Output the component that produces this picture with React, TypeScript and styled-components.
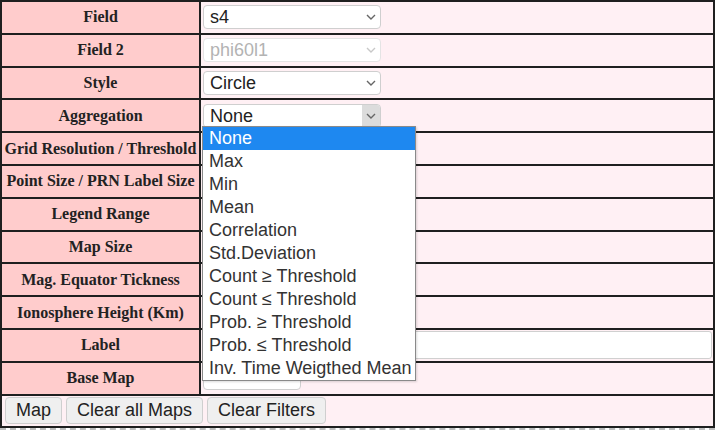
import React from "react";
import styled, { createGlobalStyle } from "styled-components";

const GlobalStyle = createGlobalStyle`
  body {
    margin: 0;
    background: #ffffff;
    font-family: "Liberation Serif", serif;
  }
`;

const aggregationOptions = [
  "None",
  "Max",
  "Min",
  "Mean",
  "Correlation",
  "Std.Deviation",
  "Count ≥ Threshold",
  "Count ≤ Threshold",
  "Prob. ≥ Threshold",
  "Prob. ≤ Threshold",
  "Inv. Time Weigthed Mean",
];

const Page = styled.div`
  width: 717px;
  height: 430px;
  overflow: hidden;
`;

const Table = styled.table`
  width: 715px;
  border-collapse: collapse;
  border: 2px solid #1f1f1f;
`;

const LabelCell = styled.td`
  width: 195px;
  height: 30.8px;
  padding: 0 1px;
  background: #ffcccc;
  border: 2px solid #1f1f1f;
  text-align: center;
  font-family: "Liberation Serif", serif;
  font-weight: bold;
  font-size: 16px;
  color: #222;
  white-space: nowrap;
`;

const ValueCell = styled.td`
  height: 30.8px;
  padding: 0 1px;
  background: #fff0f4;
  border: 2px solid #1f1f1f;
  vertical-align: middle;
`;

const ButtonCell = styled.td`
  height: 30.8px;
  padding: 0 3px;
  background: #fff0f4;
  border: 2px solid #1f1f1f;
`;

const SelectBox = styled.div<{ $width: number; $disabled?: boolean }>`
  position: relative;
  display: flex;
  align-items: center;
  width: ${(p) => p.$width}px;
  height: 24px;
  box-sizing: border-box;
  margin-left: 1px;
  border: 1px solid ${(p) => (p.$disabled ? "#e4e4e4" : "#cfcfcf")};
  border-radius: 4px;
  background: #fff;
  font-family: "Liberation Sans", Arial, sans-serif;
  font-size: 18px;
  color: ${(p) => (p.$disabled ? "#b3b3b3" : "#222")};
`;

const SelectText = styled.span`
  flex: 1;
  padding-left: 6px;
  line-height: 22px;
  white-space: nowrap;
  overflow: hidden;
`;

const Arrow = styled.span<{ $hover?: boolean; $disabled?: boolean }>`
  display: flex;
  align-items: center;
  justify-content: center;
  width: 18px;
  align-self: stretch;
  background: ${(p) => (p.$hover ? "#dcdcdc" : "transparent")};
  border-radius: 0 3px 3px 0;
  color: ${(p) => (p.$disabled ? "#c8c8c8" : "#666")};
`;

const DropList = styled.ul`
  position: absolute;
  top: 21px;
  left: -2px;
  z-index: 5;
  margin: 0;
  padding: 0;
  list-style: none;
  width: 214px;
  box-sizing: border-box;
  border: 1px solid #8a8a8a;
  background: #fff;
  box-shadow: 1px 1px 2px rgba(0, 0, 0, 0.15);
`;

const DropItem = styled.li<{ $active?: boolean }>`
  height: 23px;
  line-height: 23px;
  padding-left: 6px;
  font-family: "Liberation Sans", Arial, sans-serif;
  font-size: 18px;
  white-space: nowrap;
  color: ${(p) => (p.$active ? "#fff" : "#333")};
  background: ${(p) => (p.$active ? "#1e88f0" : "transparent")};
`;

const TextInput = styled.input`
  display: block;
  width: 100%;
  height: 28px;
  box-sizing: border-box;
  border: 1px solid #d0d0d0;
  border-radius: 3px;
  background: #fff;
  font-family: "Liberation Sans", Arial, sans-serif;
  font-size: 18px;
`;

const SmallInput = styled.input`
  width: 80px;
  height: 22px;
  box-sizing: border-box;
  margin-left: 2px;
  border: 1px solid #ccc;
  border-radius: 3px;
  font-size: 16px;
`;

const Buttons = styled.div`
  display: flex;
  gap: 4px;
`;

const Button = styled.button`
  height: 27px;
  padding: 0 10px;
  border: 1px solid #cfcfcf;
  border-radius: 4px;
  background: #efefef;
  font-family: "Liberation Sans", Arial, sans-serif;
  font-size: 18px;
  color: #222;
`;

const DashedLine = styled.div`
  width: 715px;
  border-top: 2px dashed #bdbdbd;
`;

const Chevron = () => (
  <svg width="10" height="6" viewBox="0 0 10 6">
    <polyline points="1,1 5,5 9,1" fill="none" stroke="currentColor" strokeWidth="1.4" />
  </svg>
);

type SelectProps = {
  value: string;
  width?: number;
  disabled?: boolean;
  hover?: boolean;
  children?: React.ReactNode;
};

const FakeSelect = ({ value, width = 178, disabled, hover, children }: SelectProps) => (
  <SelectBox $width={width} $disabled={disabled}>
    <SelectText>{value}</SelectText>
    <Arrow $hover={hover} $disabled={disabled}>
      <Chevron />
    </Arrow>
    {children}
  </SelectBox>
);

const Row = ({ label, children }: { label: string; children?: React.ReactNode }) => (
  <tr>
    <LabelCell>{label}</LabelCell>
    <ValueCell>{children}</ValueCell>
  </tr>
);

export default function App() {
  return (
    <Page>
      <GlobalStyle />
      <Table>
        <tbody>
          <Row label="Field">
            <FakeSelect value="s4" />
          </Row>
          <Row label="Field 2">
            <FakeSelect value="phi60l1" disabled />
          </Row>
          <Row label="Style">
            <FakeSelect value="Circle" />
          </Row>
          <Row label="Aggregation">
            <FakeSelect value="None" hover>
              <DropList>
                {aggregationOptions.map((o, i) => (
                  <DropItem key={o} $active={i === 0}>
                    {o}
                  </DropItem>
                ))}
              </DropList>
            </FakeSelect>
          </Row>
          <Row label="Grid Resolution / Threshold">
            <SmallInput />
          </Row>
          <Row label="Point Size / PRN Label Size">
            <SmallInput />
          </Row>
          <Row label="Legend Range">
            <SmallInput />
          </Row>
          <Row label="Map Size">
            <SmallInput />
          </Row>
          <Row label="Mag. Equator Tickness">
            <SmallInput />
          </Row>
          <Row label="Ionosphere Height (Km)">
            <SmallInput />
          </Row>
          <Row label="Label">
            <TextInput />
          </Row>
          <Row label="Base Map">
            <FakeSelect value="" width={98} />
          </Row>
          <tr>
            <ButtonCell colSpan={2}>
              <Buttons>
                <Button>Map</Button>
                <Button>Clear all Maps</Button>
                <Button>Clear Filters</Button>
              </Buttons>
            </ButtonCell>
          </tr>
        </tbody>
      </Table>
      <DashedLine />
    </Page>
  );
}
